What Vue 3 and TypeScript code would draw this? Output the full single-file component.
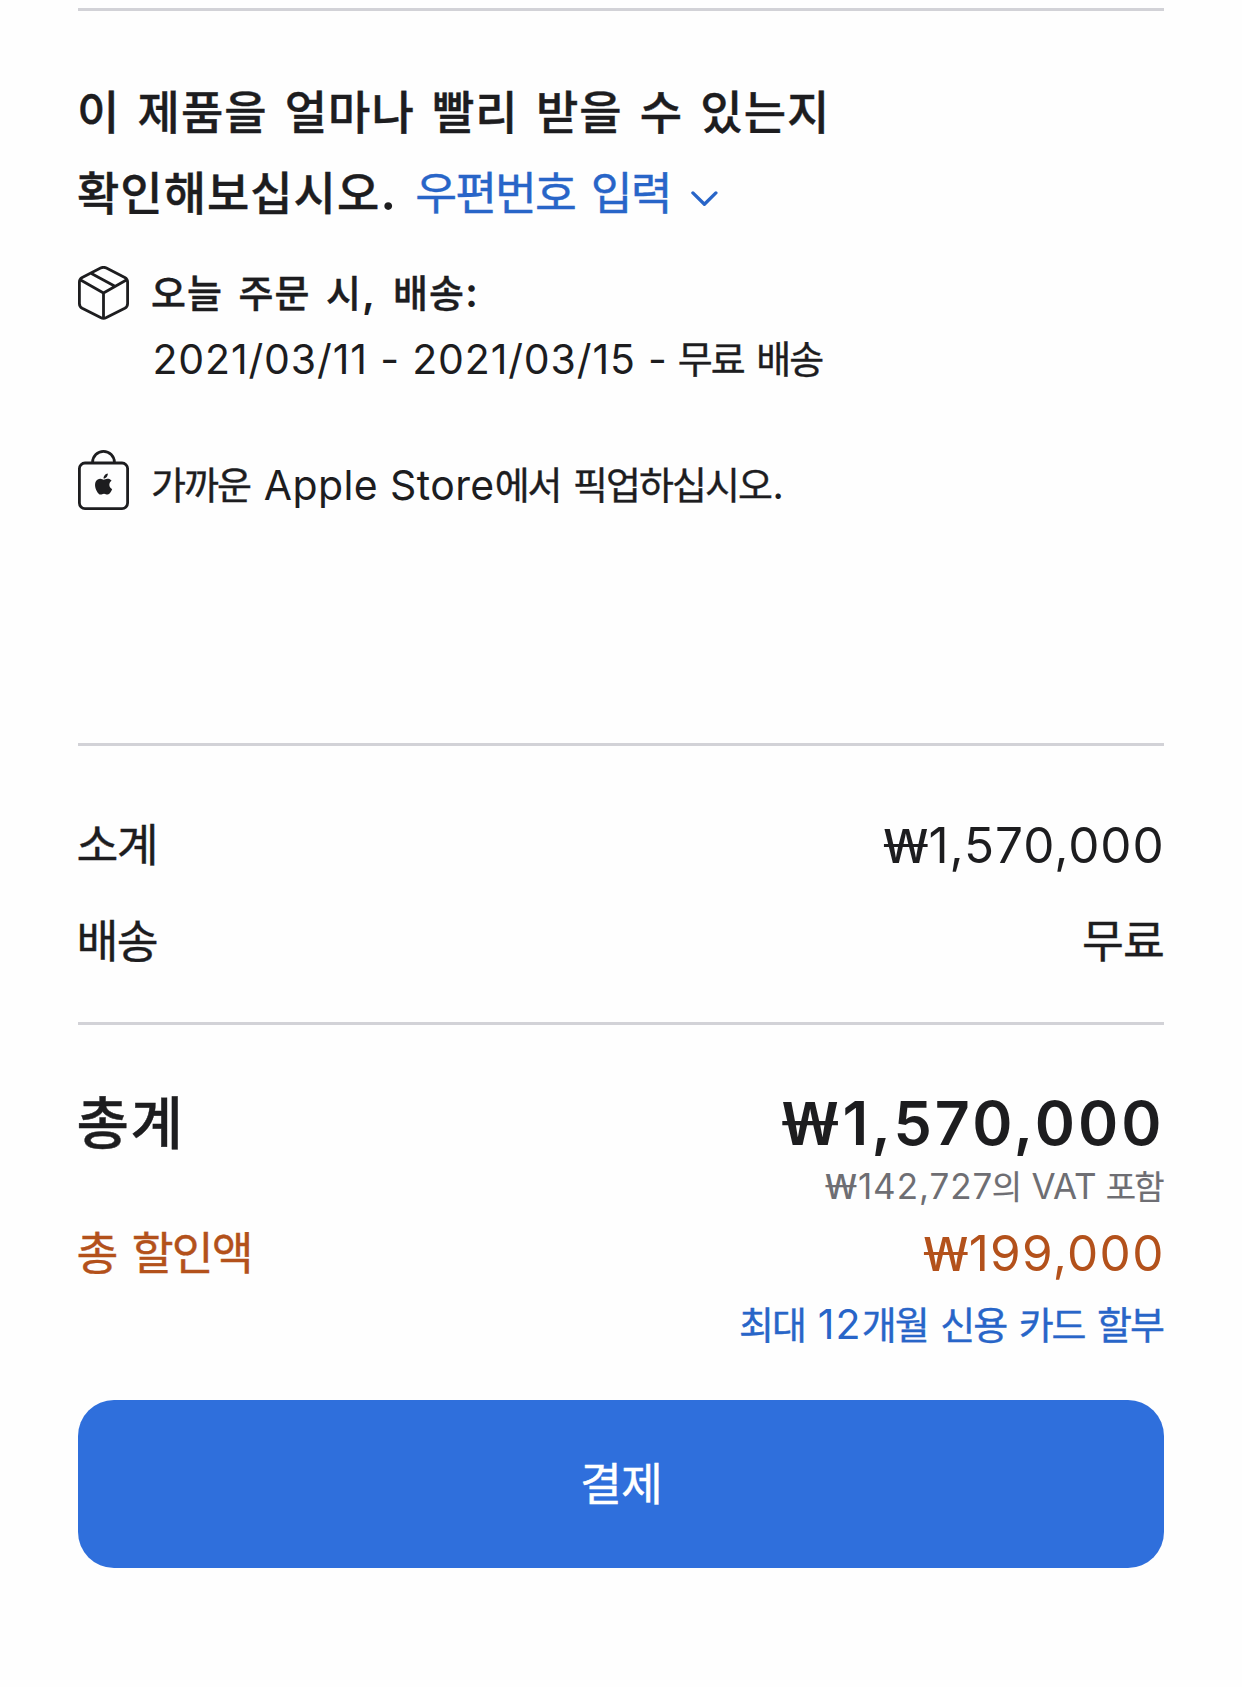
<script setup lang="ts">
interface Amount {
  value: string
}

const dates: string = '2021/03/11 - 2021/03/15 - '
const subtotal: Amount = { value: '1,570,000' }
const total: Amount = { value: '1,570,000' }
const discount: Amount = { value: '199,000' }
const vat: Amount = { value: '142,727' }
</script>

<template>
  <main class="bag">
    <hr class="rule" />

    <section class="fulfillment">
      <h2 class="question">
        <div class="line first">이 제품을 얼마나 빨리 받을 수 있는지</div>
        <div class="line second"><span>확인해보십시오</span><span class="lat stop">.</span><a class="zip">우편번호 입력</a><svg class="chevron" viewBox="0 0 27 16" width="27" height="16"><path d="M1.9 1.9 13.4 13.2 24.9 1.9" /></svg></div>
      </h2>

      <div class="option">
        <svg class="icon box" viewBox="0 0 51 54" width="51" height="54">
          <path d="M22.6 2.1Q25.5.6 28.4 2.1L46.8 11.4Q49.6 12.9 49.6 16V37.4Q49.6 40.6 46.8 42.2L28.4 51.6Q25.5 53 22.6 51.6L4.2 42.2Q1.4 40.6 1.4 37.4V16Q1.4 12.9 4.2 11.4Z" />
          <path d="M2.2 13.8 25.5 27 48.8 13.8M25.5 27V52M13.4 7.4 37.4 20.4" />
        </svg>
        <div class="detail">
          <div class="line strong"><span>오늘 주문 시</span><span class="lat comma">, </span><span>배송</span><span class="lat colon">:</span></div>
          <div class="line"><span class="lat dates">{{ dates }}</span><span class="fee">무료 배송</span></div>
        </div>
      </div>

      <div class="option pickup">
        <svg class="icon store" viewBox="0 0 51 60" width="51" height="60">
          <rect x="1.4" y="13" width="48.2" height="45.6" rx="5.6" />
          <path d="M14.6 13V12.3a10.9 10.9 0 0 1 21.8 0V13" />
          <path class="fill" transform="translate(15.1 23.6) scale(.875)" d="M12.152 6.896c-.948 0-2.415-1.078-3.96-1.04-2.04.027-3.91 1.183-4.961 3.014-2.117 3.675-.546 9.103 1.519 12.09 1.013 1.454 2.208 3.09 3.792 3.039 1.52-.065 2.09-.987 3.935-.987 1.831 0 2.35.987 3.96.948 1.637-.026 2.676-1.48 3.676-2.948 1.156-1.688 1.636-3.325 1.662-3.415-.039-.013-3.182-1.221-3.22-4.857-.026-3.04 2.48-4.494 2.597-4.559-1.429-2.09-3.623-2.324-4.39-2.376-2-.156-3.675 1.09-4.61 1.09zM15.53 3.83c.843-1.012 1.4-2.427 1.245-3.83-1.207.052-2.662.805-3.532 1.818-.78.896-1.454 2.338-1.273 3.714 1.338.104 2.715-.688 3.559-1.701" />
        </svg>
        <div class="detail">
          <div class="line"><span>가까운</span><span class="lat store-name"> Apple Store</span><span>에서 픽업하십시오</span><span class="lat end">.</span></div>
        </div>
      </div>
    </section>

    <hr class="rule" />

    <section class="costs">
      <div class="row">
        <span class="label">소계</span>
        <span class="amount"><span class="won">₩</span><span class="lat">{{ subtotal.value }}</span></span>
      </div>
      <div class="row">
        <span class="label">배송</span>
        <span class="free">무료</span>
      </div>
    </section>

    <hr class="rule" />

    <section class="summary">
      <div class="row total">
        <span class="label">총계</span>
        <span class="amount"><span class="won">₩</span><span class="lat">{{ total.value }}</span></span>
      </div>
      <div class="vat"><span class="won">₩</span><span class="lat num">{{ vat.value }}</span><span class="of">의</span><span class="lat"> VAT </span><span>포함</span></div>
      <div class="row discount">
        <span class="label">총 할인액</span>
        <span class="amount"><span class="won">₩</span><span class="lat">{{ discount.value }}</span></span>
      </div>
      <a class="installments"><span>최대</span><span class="lat"> 12</span><span>개월 신용 카드 할부</span></a>
    </section>

    <button class="checkout" type="button">결제</button>
  </main>
</template>

<style>
body {
  background: #fefefe;
}
</style>

<style scoped>
.bag {
  box-sizing: border-box;
  height: 1687px;
  padding: 8px 78px 0;
  overflow: hidden;
  color: #1d1d1f;
  font-family: "Noto Sans CJK KR", sans-serif;
  font-weight: 400;
  white-space: nowrap;
  -webkit-text-stroke-width: 0.4px;
}

.rule {
  height: 3px;
  margin: 0;
  border: 0;
  background: #d2d2d7;
}

.lat,
.won {
  font-family: Inter, "Noto Sans CJK KR", sans-serif;
  line-height: 0;
  word-spacing: 0;
  -webkit-text-stroke-width: 0;
}

/* Single-bar won sign, widened to sit with the figures */
.won {
  display: inline-block;
  font-family: "Noto Sans", sans-serif;
  letter-spacing: 0;
  transform: scaleX(1.4);
  transform-origin: right center;
}

.fulfillment {
  box-sizing: border-box;
  height: 732px;
  padding-top: 58px;
}

.question {
  height: 162px;
  margin: 0;
  font-size: 46px;
  font-weight: 500;
  line-height: 81px;
  letter-spacing: 1px;
}

.question .line {
  height: 81px;
}

.first {
  margin-left: -1px;
  word-spacing: 5.9px;
}

.second {
  margin-left: -1px;
}

.stop {
  font-size: 50px;
  font-weight: 600;
}

.zip {
  margin-left: 18px;
  color: #2865c8;
  font-size: 45.5px;
  font-weight: 400;
  line-height: 0;
  letter-spacing: -1.9px;
  word-spacing: 7.4px;
}

.chevron {
  margin-left: 20px;
  vertical-align: 3px;
  fill: none;
  stroke: #2865c8;
  stroke-width: 3.3;
  stroke-linecap: round;
  stroke-linejoin: round;
}

.option {
  display: flex;
  align-items: flex-start;
  gap: 22px;
  margin-top: 27px;
}

.pickup {
  margin-top: 59px;
}

.icon {
  flex: none;
  fill: none;
  stroke: #1d1d1f;
  stroke-width: 2.8;
  stroke-linejoin: round;
}

.icon .fill {
  fill: #1d1d1f;
  stroke: none;
}

.box {
  margin-top: 8px;
}

.detail .line {
  height: 66.5px;
  font-size: 38px;
  line-height: 66.5px;
  letter-spacing: -2px;
  word-spacing: 6px;
}

.detail .lat {
  font-size: 41px;
  letter-spacing: 0.5px;
  word-spacing: 0;
}

.detail .strong {
  font-weight: 500;
  letter-spacing: 1px;
}

.strong .lat {
  font-weight: 600;
}

.detail .comma {
  word-spacing: 7.5px;
}

.detail .dates {
  margin-left: 1.5px;
  letter-spacing: 0.86px;
}

.fee {
  margin-left: -2.5px;
  line-height: 0;
  vertical-align: 1px;
}

.detail .store-name {
  margin-left: 2px;
  letter-spacing: 0.4px;
  vertical-align: -0.5px;
}

.end {
  margin-left: 1.5px;
}

.costs {
  height: 276px;
  padding-top: 48.5px;
  box-sizing: border-box;
}

.row {
  display: flex;
  justify-content: space-between;
  height: 96px;
  font-size: 45.5px;
  line-height: 96px;
}

.label {
  margin-left: -1.5px;
  line-height: 94px;
  letter-spacing: -1.5px;
  word-spacing: 7px;
}

.amount {
  margin-right: -0.7px;
}

.amount .lat {
  font-size: 49.5px;
  letter-spacing: 0.95px;
}

.amount .won {
  font-size: 48px;
}

.free {
  line-height: 94px;
  letter-spacing: -0.9px;
}

.summary {
  padding-top: 54.5px;
}

.total {
  height: 80px;
  font-size: 57px;
  font-weight: 500;
  line-height: 80px;
}

.total .label {
  line-height: 78px;
  letter-spacing: 1.5px;
}

.total .amount .lat {
  font-size: 61px;
  font-weight: 600;
  letter-spacing: 3.1px;
}

.total .amount .won {
  margin-right: 4px;
  font-size: 60px;
  font-weight: 600;
  transform: scaleX(1.34);
}

.vat {
  height: 50px;
  margin-right: 1.5px;
  color: #6e6e73;
  font-size: 33px;
  line-height: 50px;
  text-align: right;
  letter-spacing: -2px;
  -webkit-text-stroke-width: 0.2px;
}

.vat .won {
  margin-right: 1px;
  font-size: 34px;
  letter-spacing: 0;
}

.vat .lat {
  font-size: 35px;
  letter-spacing: -0.3px;
}

.vat .num {
  margin-right: -1.5px;
  letter-spacing: 0.93px;
}

.vat .of {
  letter-spacing: 0;
}

.discount {
  height: 82px;
  color: #b3511b;
  line-height: 82px;
}

.discount .label {
  line-height: 80px;
  letter-spacing: -1.9px;
}

.discount .amount .lat {
  letter-spacing: 1.3px;
}

.installments {
  display: block;
  height: 64px;
  margin-right: 1px;
  color: #2865c8;
  font-size: 38px;
  line-height: 62px;
  text-align: right;
  letter-spacing: -2px;
  word-spacing: 6px;
}

.installments .lat {
  font-size: 41px;
  letter-spacing: 1.2px;
}

.checkout {
  display: block;
  width: 100%;
  height: 168px;
  margin: 44.5px 0 0;
  padding: 0 0 5px;
  border: 0;
  border-radius: 36px;
  background: #2f6fdc;
  color: #fff;
  font: 400 45.5px/163px "Noto Sans CJK KR", sans-serif;
  letter-spacing: -0.8px;
  -webkit-text-stroke-width: 0.4px;
}
</style>
